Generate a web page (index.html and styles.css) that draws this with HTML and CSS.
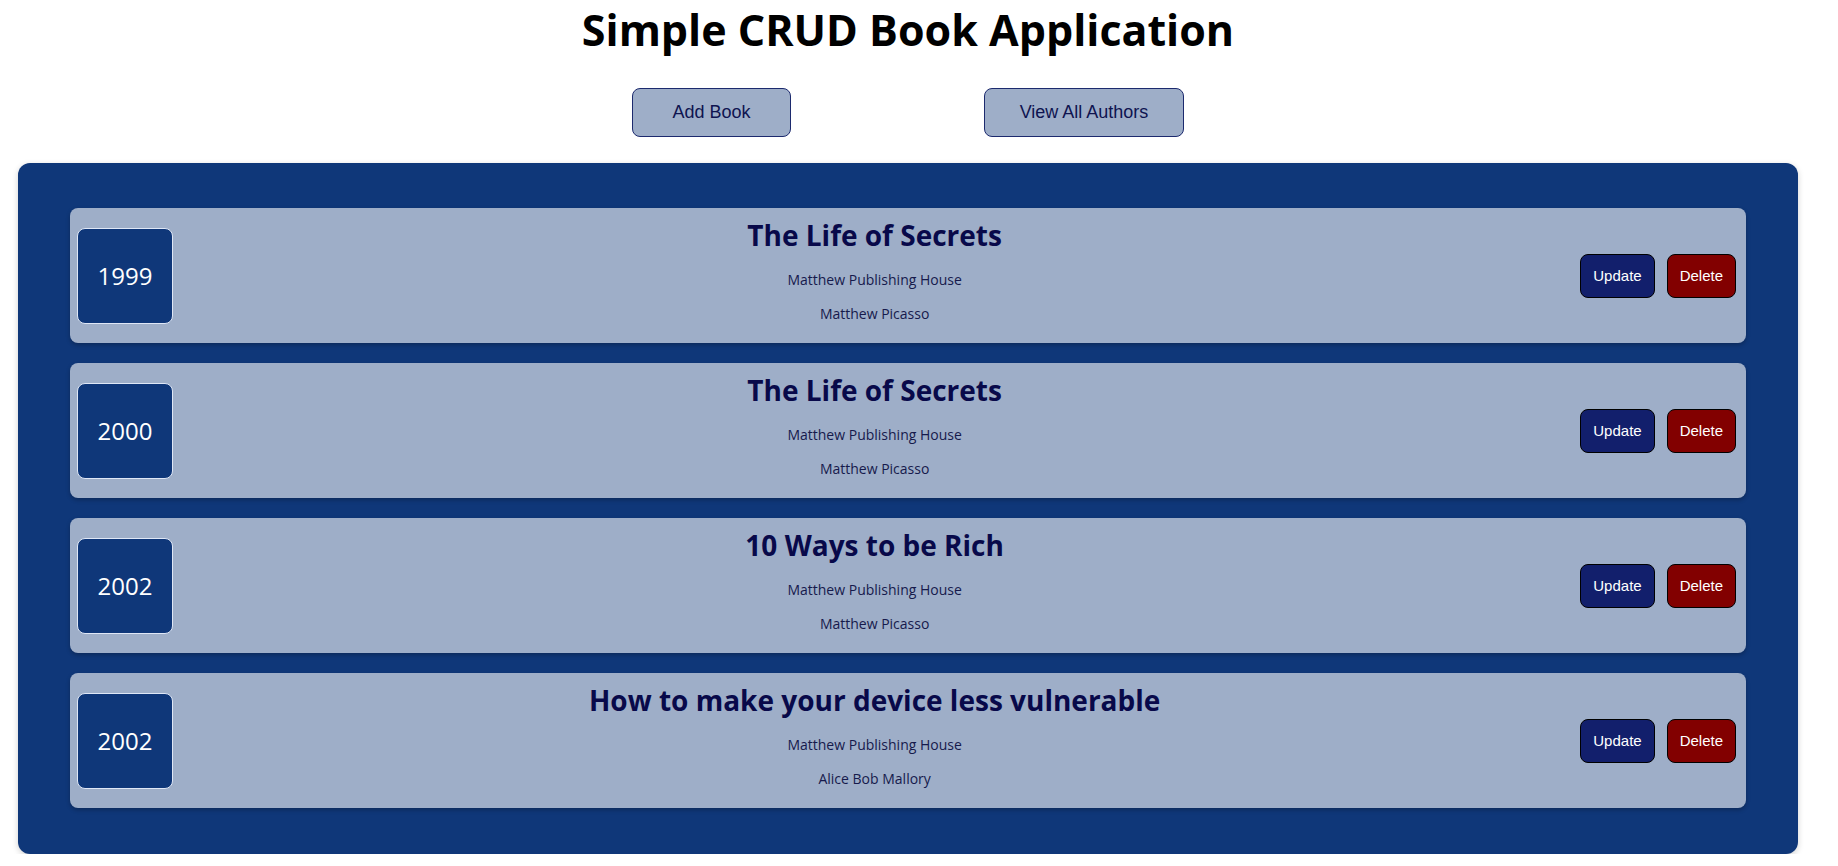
FILE: index.html
```html
<!DOCTYPE html>
<html lang="en">
<head>
<meta charset="utf-8">
<title>Simple CRUD Book Application</title>
<link rel="stylesheet" href="styles.css">
</head>
<body>
<div class="page">
  <h1 class="page-title">Simple CRUD Book Application</h1>
  <div class="nav">
    <button class="nav-btn nav-add">Add Book</button>
    <button class="nav-btn nav-authors">View All Authors</button>
  </div>
  <div class="book-list">
    <div class="book-card">
      <div class="year">1999</div>
      <div class="info">
        <h2 class="book-title">The Life of Secrets</h2>
        <p class="meta">Matthew Publishing House</p>
        <p class="meta">Matthew Picasso</p>
      </div>
      <div class="card-actions">
        <button class="btn btn-update">Update</button>
        <button class="btn btn-delete">Delete</button>
      </div>
    </div>
    <div class="book-card">
      <div class="year">2000</div>
      <div class="info">
        <h2 class="book-title">The Life of Secrets</h2>
        <p class="meta">Matthew Publishing House</p>
        <p class="meta">Matthew Picasso</p>
      </div>
      <div class="card-actions">
        <button class="btn btn-update">Update</button>
        <button class="btn btn-delete">Delete</button>
      </div>
    </div>
    <div class="book-card">
      <div class="year">2002</div>
      <div class="info">
        <h2 class="book-title">10 Ways to be Rich</h2>
        <p class="meta">Matthew Publishing House</p>
        <p class="meta">Matthew Picasso</p>
      </div>
      <div class="card-actions">
        <button class="btn btn-update">Update</button>
        <button class="btn btn-delete">Delete</button>
      </div>
    </div>
    <div class="book-card">
      <div class="year">2002</div>
      <div class="info">
        <h2 class="book-title">How to make your device less vulnerable</h2>
        <p class="meta">Matthew Publishing House</p>
        <p class="meta">Alice Bob Mallory</p>
      </div>
      <div class="card-actions">
        <button class="btn btn-update">Update</button>
        <button class="btn btn-delete">Delete</button>
      </div>
    </div>
  </div>
</div>
</body>
</html>
```

FILE: styles.css
```css
html, body {
  margin: 0;
  padding: 0;
  background: #ffffff;
}

body {
  font-family: "Open Sans", "Noto Sans", sans-serif;
}

.page {
  width: 1816px;
}

.page-title {
  margin: 0;
  text-align: center;
  font-size: 43px;
  line-height: 60px;
  font-weight: 700;
  color: #000000;
}

.nav {
  display: flex;
  justify-content: center;
  gap: 193px;
  margin-top: 28px;
}

.nav-btn {
  box-sizing: border-box;
  height: 49px;
  background: #9eaec8;
  border: 1px solid #1c2a6e;
  border-radius: 8px;
  font-family: "Liberation Sans", Arial, sans-serif;
  font-size: 18px;
  color: #0f1450;
  padding: 0;
}

.nav-add {
  width: 159px;
}

.nav-authors {
  width: 200px;
}

.book-list {
  margin: 26px 18px 0;
  padding: 45px 52px 46px;
  background: #0f3779;
  border-radius: 12px;
  box-shadow: 0 2px 6px rgba(0, 0, 0, 0.18);
  display: flex;
  flex-direction: column;
  gap: 20px;
}

.book-card {
  display: flex;
  align-items: center;
  padding: 0 10px 0 7px;
  background: #9eaec8;
  border-radius: 8px;
  box-shadow: 0 2px 4px rgba(0, 0, 0, 0.25);
}

.year {
  box-sizing: border-box;
  width: 96px;
  height: 96px;
  flex: none;
  display: flex;
  align-items: center;
  justify-content: center;
  background: #0f3779;
  border: 1px solid #dfe7f6;
  border-radius: 8px;
  color: #ffffff;
  font-size: 24px;
}

.info {
  flex: 1;
  text-align: center;
  padding: 8px 4px 20px 0;
}

.book-title {
  margin: 0 0 16px;
  font-size: 28px;
  line-height: 38px;
  font-weight: 700;
  color: #08094a;
}

.meta {
  margin: 0;
  font-size: 14px;
  line-height: 19px;
  color: #161a4c;
}

.meta + .meta {
  margin-top: 15px;
}

.card-actions {
  display: flex;
  gap: 12px;
  flex: none;
}

.btn {
  box-sizing: border-box;
  height: 44px;
  padding: 0 12px;
  border: 1px solid #000000;
  border-radius: 8px;
  font-family: "Liberation Sans", Arial, sans-serif;
  font-size: 15px;
  color: #ffffff;
}

.btn-update {
  background: #121f6c;
}

.btn-delete {
  background: #820000;
}
```
